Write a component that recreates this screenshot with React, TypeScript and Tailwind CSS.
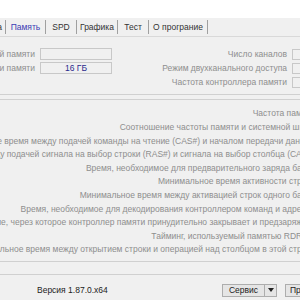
export default function App() {
  const timings = [
    "Частота памяти",
    "Соотношение частоты памяти и системной шины",
    "Минимальное время между подачей команды на чтение (CAS#) и началом передачи данных",
    "Задержка между подачей сигнала на выбор строки (RAS#) и сигнала на выбор столбца (CAS#)",
    "Время, необходимое для предварительного заряда банка",
    "Минимальное время активности строки",
    "Минимальное время между активацией строк одного банка",
    "Время, необходимое для декодирования контроллером команд и адресов",
    "Время простоя в открытом режиме, через которое контроллер памяти принудительно закрывает и предзаряжает",
    "Тайминг, используемый памятью RDRAM",
    "Минимальное время между открытием строки и операцией над столбцом в этой строке",
  ];
  return (
    <div className="w-[300px] h-[300px] overflow-hidden bg-[#f0f0f0] flex flex-col text-[8.5px] text-[#8e8e8e] font-['Liberation_Sans',Arial,sans-serif]">
      <div className="h-[18px] bg-white shrink-0" />
      {/* tabs */}
      <div className="h-[19px] shrink-0 flex items-stretch border-b border-[#d9d9d9] text-[#333]">
        <div className="w-[6px] shrink-0 flex items-center justify-end pr-[3px] whitespace-nowrap border-r border-[#a0a0a0] my-[2px]">Кэша</div>
        <div className="w-[40px] shrink-0 flex items-center justify-center border-r border-[#a0a0a0] my-[2px] text-[#3c3cb4]">Память</div>
        <div className="w-[31px] shrink-0 flex items-center justify-center border-r border-[#a0a0a0] my-[2px]">SPD</div>
        <div className="w-[41px] shrink-0 flex items-center justify-center border-r border-[#a0a0a0] my-[2px]">Графика</div>
        <div className="w-[31px] shrink-0 flex items-center justify-center border-r border-[#a0a0a0] my-[2px]">Тест</div>
        <div className="w-[59px] shrink-0 flex items-center justify-center border-r border-[#a0a0a0] my-[2px]">О програние</div>
      </div>
      {/* general */}
      <div className="shrink-0 flex flex-col gap-[2px] pt-[11px] pb-[6px] border-b border-[#d0d0d0]">
        <div className="w-[320px] shrink-0 h-[12px] flex items-center">
          <div className="w-[35px] shrink-0 flex justify-end whitespace-nowrap">Тип оперативной памяти</div>
          <div className="ml-[5px] w-[72px] h-[12px] shrink-0 border border-[#c8c8c8]" />
          <div className="flex-1 flex justify-end whitespace-nowrap">Число каналов</div>
          <div className="ml-[5px] w-[28px] h-[11px] shrink-0 border border-[#c8c8c8]" />
        </div>
        <div className="w-[320px] shrink-0 h-[12px] flex items-center">
          <div className="w-[35px] shrink-0 flex justify-end whitespace-nowrap">Объём планки памяти</div>
          <div className="ml-[5px] w-[72px] h-[12px] shrink-0 border border-[#c8c8c8] flex items-center justify-center text-[#2a2a8c]">16 ГБ</div>
          <div className="flex-1 flex justify-end whitespace-nowrap">Режим двухканального доступа</div>
          <div className="ml-[5px] w-[28px] h-[11px] shrink-0 border border-[#c8c8c8]" />
        </div>
        <div className="w-[320px] shrink-0 h-[12px] flex items-center">
          <div className="w-[112px] shrink-0" />
          <div className="flex-1 flex justify-end whitespace-nowrap">Частота контроллера памяти</div>
          <div className="ml-[5px] w-[28px] h-[11px] shrink-0 border border-[#c8c8c8]" />
        </div>
      </div>
      {/* timings */}
      <div className="shrink-0 mt-[4px] border-t border-[#d0d0d0] pt-[7px] pb-[4px] border-b flex flex-col">
        {timings.map((t) => (
          <div key={t} className="w-[315px] shrink-0 h-[13.6px] flex items-center justify-end whitespace-nowrap">
            {t}
          </div>
        ))}
      </div>
      <div className="h-[13px] shrink-0 border-b border-[#d0d0d0]" />
      {/* bottom bar */}
      <div className="flex items-start pt-[9px] text-[#222]">
        <div className="w-[222px] shrink-0 pl-[37px] h-[13px] flex items-center whitespace-nowrap">Версия 1.87.0.x64</div>
        <div className="h-[13px] shrink-0 flex border border-[#adadad] bg-[#e5e5e5]">
          <div className="w-[42px] flex items-center justify-center border-r border-[#adadad]">Сервис</div>
          <div className="w-[11px] flex items-center justify-center">
            <svg width="6" height="4" viewBox="0 0 6 4"><path d="M0 0h6L3 4z" fill="#222" /></svg>
          </div>
        </div>
        <div className="ml-[8px] w-[50px] h-[13px] shrink-0 flex items-center pl-[4px] border border-[#adadad] bg-[#e5e5e5] whitespace-nowrap">Проверка</div>
      </div>
    </div>
  );
}
